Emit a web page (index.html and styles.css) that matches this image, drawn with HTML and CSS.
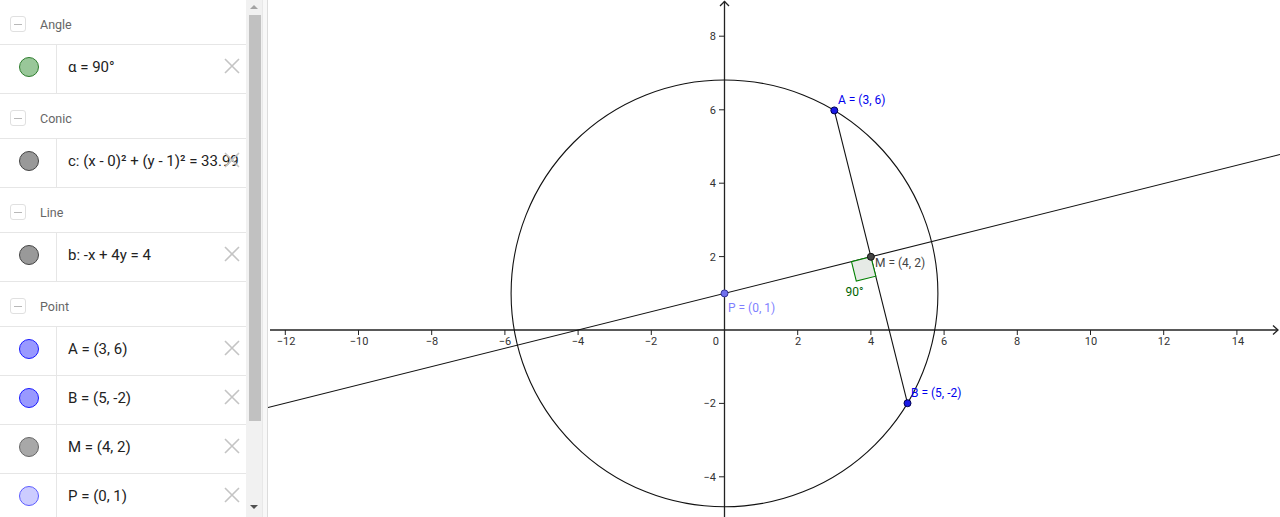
FILE: index.html
```html
<!DOCTYPE html>
<html>
<head>
<meta charset="utf-8">
<link rel="stylesheet" href="styles.css">
</head>
<body>
<div class="app">
  <div class="panel">
    <div class="group-header"><span class="toggle"></span><span class="gname">Angle</span></div>
    <div class="item">
      <div class="marble-cell"><span class="marble m-angle"></span></div>
      <div class="formula">α = 90°</div>
      <svg class="del" viewBox="0 0 16 16"><path d="M1 1L15 15M15 1L1 15"/></svg>
    </div>
    <div class="group-header"><span class="toggle"></span><span class="gname">Conic</span></div>
    <div class="item">
      <div class="marble-cell"><span class="marble m-gray"></span></div>
      <div class="formula">c: (x - 0)² + (y - 1)² = 33.99</div>
      <svg class="del" viewBox="0 0 16 16"><path d="M1 1L15 15M15 1L1 15"/></svg>
    </div>
    <div class="group-header"><span class="toggle"></span><span class="gname">Line</span></div>
    <div class="item">
      <div class="marble-cell"><span class="marble m-gray"></span></div>
      <div class="formula">b: -x + 4y = 4</div>
      <svg class="del" viewBox="0 0 16 16"><path d="M1 1L15 15M15 1L1 15"/></svg>
    </div>
    <div class="group-header"><span class="toggle"></span><span class="gname">Point</span></div>
    <div class="item">
      <div class="marble-cell"><span class="marble m-blue"></span></div>
      <div class="formula">A = (3, 6)</div>
      <svg class="del" viewBox="0 0 16 16"><path d="M1 1L15 15M15 1L1 15"/></svg>
    </div>
    <div class="item">
      <div class="marble-cell"><span class="marble m-blue"></span></div>
      <div class="formula">B = (5, -2)</div>
      <svg class="del" viewBox="0 0 16 16"><path d="M1 1L15 15M15 1L1 15"/></svg>
    </div>
    <div class="item">
      <div class="marble-cell"><span class="marble m-mid"></span></div>
      <div class="formula">M = (4, 2)</div>
      <svg class="del" viewBox="0 0 16 16"><path d="M1 1L15 15M15 1L1 15"/></svg>
    </div>
    <div class="item">
      <div class="marble-cell"><span class="marble m-light"></span></div>
      <div class="formula">P = (0, 1)</div>
      <svg class="del" viewBox="0 0 16 16"><path d="M1 1L15 15M15 1L1 15"/></svg>
    </div>
  </div>
  <div class="scrollbar">
    <span class="arrow-up"></span>
    <div class="thumb"></div>
    <span class="arrow-down"></span>
  </div>
  <div class="splitter"></div>
  <div class="graph">
    <svg class="plot" width="1012" height="517" viewBox="268 0 1012 517">
      <g class="axis">
        <line x1="270" y1="330" x2="1278" y2="330"/>
        <line x1="724.5" y1="1" x2="724.5" y2="517"/>
        <path class="arrowhead" d="M1273 325.5L1278 330L1273 334.5"/>
        <path class="arrowhead" d="M720 6L724.5 1.5L729 6"/>
      </g>
      <g class="ticks">
        <line x1="285.3" y1="330" x2="285.3" y2="335"/>
        <line x1="358.5" y1="330" x2="358.5" y2="335"/>
        <line x1="431.7" y1="330" x2="431.7" y2="335"/>
        <line x1="504.9" y1="330" x2="504.9" y2="335"/>
        <line x1="578.1" y1="330" x2="578.1" y2="335"/>
        <line x1="651.3" y1="330" x2="651.3" y2="335"/>
        <line x1="797.7" y1="330" x2="797.7" y2="335"/>
        <line x1="870.9" y1="330" x2="870.9" y2="335"/>
        <line x1="944.1" y1="330" x2="944.1" y2="335"/>
        <line x1="1017.3" y1="330" x2="1017.3" y2="335"/>
        <line x1="1090.5" y1="330" x2="1090.5" y2="335"/>
        <line x1="1163.7" y1="330" x2="1163.7" y2="335"/>
        <line x1="1236.9" y1="330" x2="1236.9" y2="335"/>
        <line x1="719" y1="36.2" x2="724.5" y2="36.2"/>
        <line x1="719" y1="109.8" x2="724.5" y2="109.8"/>
        <line x1="719" y1="183.2" x2="724.5" y2="183.2"/>
        <line x1="719" y1="256.6" x2="724.5" y2="256.6"/>
        <line x1="719" y1="403.4" x2="724.5" y2="403.4"/>
        <line x1="719" y1="476.8" x2="724.5" y2="476.8"/>
      </g>
      <g class="ticklabels xl">
        <text x="286" y="345">−12</text>
        <text x="359" y="345">−10</text>
        <text x="432" y="345">−8</text>
        <text x="505" y="345">−6</text>
        <text x="578" y="345">−4</text>
        <text x="651" y="345">−2</text>
        <text x="798" y="345">2</text>
        <text x="871" y="345">4</text>
        <text x="944" y="345">6</text>
        <text x="1017" y="345">8</text>
        <text x="1091" y="345">10</text>
        <text x="1164" y="345">12</text>
        <text x="1238" y="345">14</text>
      </g>
      <g class="ticklabels yl">
        <text x="719" y="345">0</text>
        <text x="716" y="40">8</text>
        <text x="716" y="114">6</text>
        <text x="716" y="187">4</text>
        <text x="716" y="260.5">2</text>
        <text x="716" y="407">−2</text>
        <text x="716" y="480.5">−4</text>
      </g>
      <circle class="obj" cx="724.5" cy="293.4" r="213.4"/>
      <line class="obj" x1="268" y1="407.5" x2="1280" y2="154.5"/>
      <line class="obj" x1="834.3" y1="110.4" x2="907.5" y2="403.2"/>
      <path class="rangle" d="M870.9 256.8L851.5 261.7L856.3 281.1L875.8 276.2Z"/>
      <text class="lbl l-angle" x="845.5" y="296">90°</text>
      <circle class="pt p-blue" cx="834.3" cy="110.4" r="3.5"/>
      <circle class="pt p-blue" cx="907.5" cy="403.2" r="3.5"/>
      <circle class="pt p-mid" cx="870.9" cy="256.8" r="3.5"/>
      <circle class="pt p-light" cx="724.5" cy="293.4" r="3.5"/>
      <text class="lbl l-blue" x="838" y="104">A = (3, 6)</text>
      <text class="lbl l-blue" x="911" y="397">B = (5, -2)</text>
      <text class="lbl l-mid" x="875" y="267">M = (4, 2)</text>
      <text class="lbl l-light" x="728" y="312">P = (0, 1)</text>
    </svg>
  </div>
</div>
</body>
</html>
```
FILE: styles.css
```css
* { box-sizing: border-box; }
html, body { margin: 0; padding: 0; background: #fff; }
body { font-family: Roboto, "Noto Sans", sans-serif; }

.app {
  display: flex;
  width: 1280px;
  height: 517px;
  overflow: hidden;
}

.panel {
  width: 246px;
  flex: none;
  height: 517px;
  overflow: hidden;
  background: #fff;
}

.group-header {
  height: 45px;
  display: flex;
  align-items: center;
  padding-top: 4px;
  padding-left: 10px;
  border-bottom: 1px solid #e6e6e6;
}
.toggle {
  width: 16px;
  height: 16px;
  border: 1px solid #e0e0e0;
  border-radius: 3px;
  position: relative;
  flex: none;
}
.toggle::after {
  content: "";
  position: absolute;
  left: 3px;
  top: 6.5px;
  width: 8px;
  height: 1px;
  background: #b8b8b8;
}
.gname {
  margin-left: 14px;
  font-size: 12.5px;
  color: #666;
}

.item {
  height: 49px;
  display: flex;
  align-items: center;
  border-bottom: 1px solid #e6e6e6;
}
.marble-cell {
  width: 57px;
  height: 100%;
  flex: none;
  border-right: 1px solid #e6e6e6;
  display: flex;
  align-items: center;
  justify-content: center;
  padding-bottom: 4px;
}
.marble {
  width: 20px;
  height: 20px;
  border-radius: 50%;
  display: block;
  margin-left: 1px;
}
.m-angle { background: #99c799; border: 1px solid #2e7d2e; }
.m-gray { background: #999; border: 1px solid #444; }
.m-blue { background: #9999ff; border: 1px solid #1a1aff; }
.m-mid { background: #a8a8a8; border: 1px solid #666; }
.m-light { background: #ccccff; border: 1px solid #5c5cff; }

.formula {
  flex: 1;
  min-width: 0;
  padding-left: 11px;
  padding-bottom: 4px;
  font-size: 15px;
  color: #222;
  white-space: nowrap;
}
.del {
  flex: none;
  width: 16px;
  height: 16px;
  margin-right: 6px;
  margin-bottom: 6px;
  fill: none;
  stroke: #c4c4c4;
  stroke-width: 1.6;
}

.scrollbar {
  width: 16px;
  flex: none;
  height: 517px;
  background: #f1f1f1;
  display: flex;
  flex-direction: column;
  align-items: center;
}
.thumb {
  margin-top: 6px;
  width: 12px;
  height: 406px;
  background: #c1c1c1;
  margin-left: 1px;
}
.arrow-up, .arrow-down {
  display: block;
  width: 0;
  height: 0;
  border-left: 4px solid transparent;
  border-right: 4px solid transparent;
}
.arrow-up {
  margin-top: 5px;
  border-bottom: 4px solid #a3a3a3;
}
.arrow-down {
  margin-top: auto;
  margin-bottom: 8px;
  border-top: 4px solid #505050;
}

.splitter {
  width: 6px;
  flex: none;
  height: 517px;
  background: #f8f8f8;
  border-left: 1px solid #e8e8e8;
  border-right: 1px solid #dcdcdc;
}

.graph {
  flex: 1;
  height: 517px;
  overflow: hidden;
}
.plot { display: block; }

.axis line { stroke: #222; stroke-width: 1.3; }
.arrowhead { fill: none; stroke: #222; stroke-width: 1.3; }
.ticks line { stroke: #222; stroke-width: 1; }
.ticklabels text {
  font-family: Roboto, "Noto Sans", sans-serif;
  font-size: 11px;
  fill: #333;
}
.xl text { text-anchor: middle; }
.yl text { text-anchor: end; }

.obj { fill: none; stroke: #111; stroke-width: 1.1; }
.rangle { fill: #e6eae6; stroke: #008000; stroke-width: 1.1; }

.pt { stroke-width: 1; }
.p-blue { fill: #1a1ae6; stroke: #000050; }
.p-mid { fill: #444; stroke: #111; }
.p-light { fill: #7070ee; stroke: #333399; }

.lbl {
  font-family: Roboto, "Noto Sans", sans-serif;
  font-size: 12px;
}
.l-angle { fill: #006400; font-size: 12px; }
.l-blue { fill: #0000ee; }
.l-mid { fill: #444; }
.l-light { fill: #7f7fff; }
```
